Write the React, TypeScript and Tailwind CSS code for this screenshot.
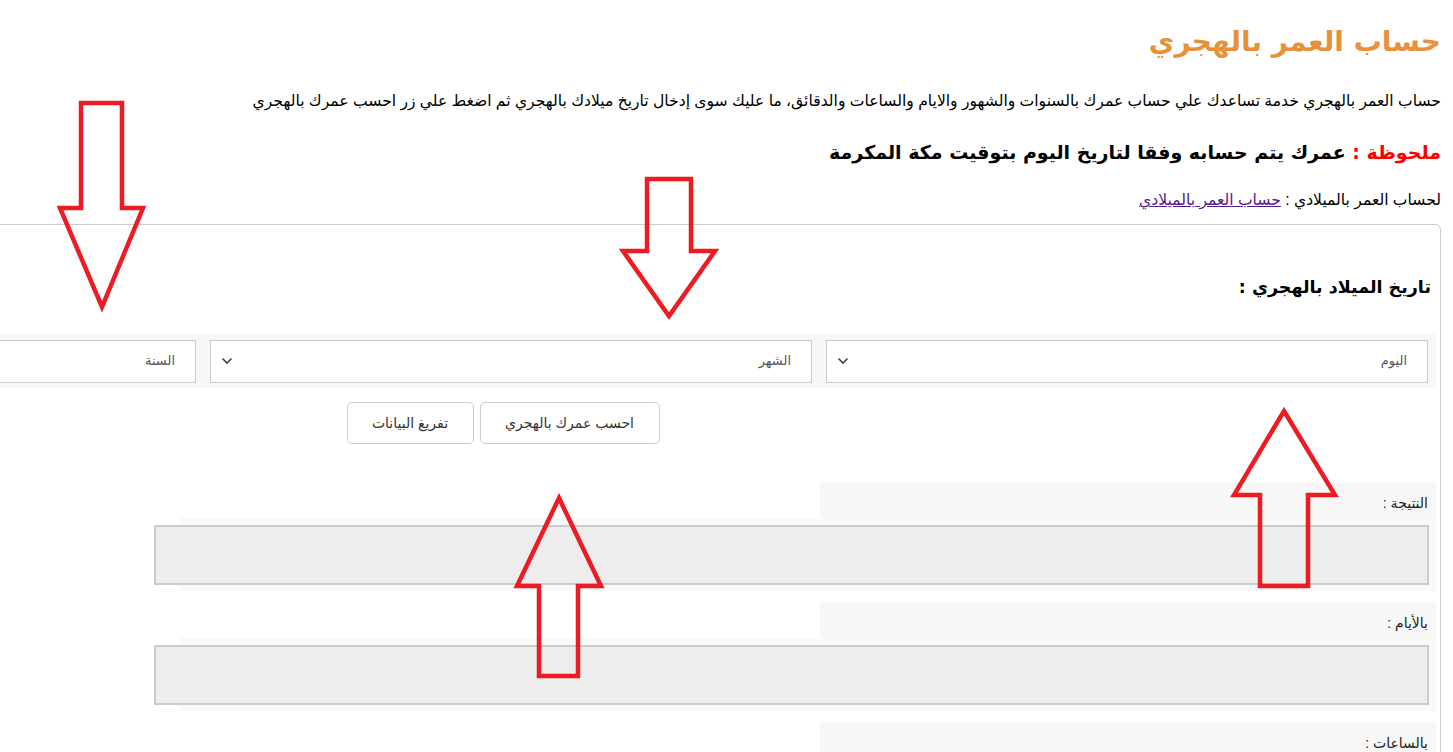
import React from "react";

const Arrow = ({ points }: { points: string }) => (
  <polygon points={points} fill="none" stroke="#ed1c24" strokeWidth={4.5} strokeLinejoin="miter" />
);

const SelectBox = ({ label }: { label: string }) => (
  <div className="relative flex h-[43px] items-center border border-[#cccccc] bg-white pr-[20px] text-[13px] text-[#555555]">
    <span>{label}</span>
    <svg className="absolute left-[10px] top-1/2 -translate-y-1/2" width="12" height="8" viewBox="0 0 12 8">
      <path d="M1.5 1.5 L6 6 L10.5 1.5" fill="none" stroke="#444" strokeWidth="1.6" />
    </svg>
  </div>
);

const ResultGroup = ({ label, mt }: { label: string; mt: string }) => (
  <div className={mt}>
    <div className="flex h-[35px] w-[616px] items-center bg-[#f7f7f7] pr-[8px] text-[14px] text-[#222]">
      <span className="mt-[6px]">{label}</span>
    </div>
    <div className="h-[73px] w-[1256px] bg-[#f9f9f9] pr-[7px] pt-[7px]">
      <div className="h-[60px] w-[1275px] border-2 border-[#cccccc] bg-[#ededed]" />
    </div>
  </div>
);

export default function App() {
  return (
    <div
      dir="rtl"
      className="relative h-[752px] w-[1453px] overflow-hidden bg-white text-black"
      style={{ fontFamily: '"Liberation Sans", "DejaVu Sans", Arial, sans-serif' }}
    >
      <div className="pr-[12px]">
        <h1
          className="mt-[20px] text-[28px] font-bold leading-[44px] text-[#e8913a]"
          style={{ fontFamily: '"DejaVu Sans", sans-serif' }}
        >
          حساب العمر بالهجري
        </h1>
        <p className="mt-[27px] text-[15.6px] leading-[20px]">
          حساب العمر بالهجري خدمة تساعدك علي حساب عمرك بالسنوات والشهور والايام والساعات والدقائق، ما عليك سوى إدخال تاريخ ميلادك بالهجري ثم اضغط علي زر احسب عمرك بالهجري
        </p>
        <p
          className="mt-[26px] text-[19px] font-bold leading-[30px]"
          style={{ fontFamily: '"DejaVu Sans", sans-serif' }}
        >
          <span className="text-[#ff0000]">ملحوظة : </span>
          عمرك يتم حسابه وفقا لتاريخ اليوم بتوقيت مكة المكرمة
        </p>
        <p className="mt-[23px] text-[15.6px] leading-[20px]">
          لحساب العمر بالميلادي :{" "}
          <a href="#" className="text-[#551a8b] underline">
            حساب العمر بالميلادي
          </a>
        </p>

        <div className="mt-[14px] h-[600px] w-[1872px] rounded-tr-[6px] border border-[#cccccc] pr-[4px]">
          <h2
            className="mt-[47px] pr-[5px] text-[17.5px] font-bold leading-[30px]"
            style={{ fontFamily: '"DejaVu Sans", sans-serif' }}
          >
            تاريخ الميلاد بالهجري :
          </h2>
          <div className="mt-[32px] grid h-[54px] w-[1850px] grid-cols-3 items-center gap-[14px] bg-[#f7f7f7] px-[8px]">
            <SelectBox label="اليوم" />
            <SelectBox label="الشهر" />
            <SelectBox label="السنة" />
          </div>
          <div className="mt-[14px] flex justify-center gap-[6px]">
            <button className="h-[42px] w-[180px] rounded-[5px] border border-[#cccccc] bg-white text-[14px] text-[#333]">
              احسب عمرك بالهجري
            </button>
            <button className="h-[42px] w-[127px] rounded-[5px] border border-[#cccccc] bg-white text-[14px] text-[#333]">
              تفريغ البيانات
            </button>
          </div>
          <ResultGroup label="النتيجة :" mt="mt-[39px]" />
          <ResultGroup label="بالأيام :" mt="mt-[12px]" />
          <ResultGroup label="بالساعات :" mt="mt-[12px]" />
        </div>
      </div>

      <svg className="pointer-events-none absolute left-0 top-0" width="1453" height="752">
        <Arrow points="81,103 122,103 122,208 143,208 102,307 60,208 81,208" />
        <Arrow points="647,179 691,179 691,251 715,251 669,316 623,251 647,251" />
        <Arrow points="1284,411 1335,495 1308,495 1308,586 1260,586 1260,495 1234,495" />
        <Arrow points="559,498 601,586 578,586 578,676 539,676 539,586 517,586" />
      </svg>
    </div>
  );
}
